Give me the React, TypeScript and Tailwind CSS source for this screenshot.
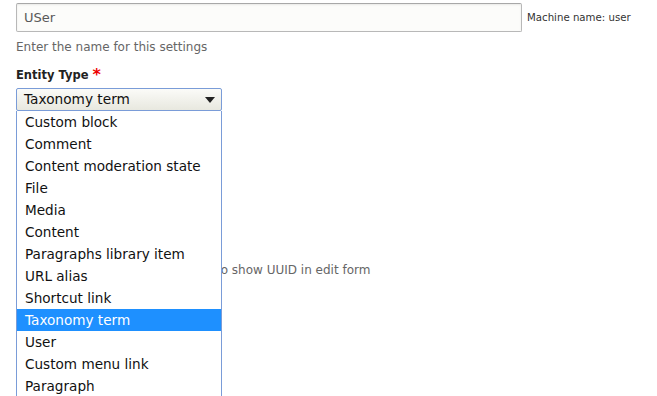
import React from "react";

const items = [
  "Custom block",
  "Comment",
  "Content moderation state",
  "File",
  "Media",
  "Content",
  "Paragraphs library item",
  "URL alias",
  "Shortcut link",
  "Taxonomy term",
  "User",
  "Custom menu link",
  "Paragraph",
];

export default function App() {
  return (
    <div
      className="relative h-[396px] w-[657px] overflow-hidden bg-white pt-[3px] pl-[16px] text-[#333]"
      style={{ fontFamily: '"DejaVu Sans", Verdana, sans-serif' }}
    >
      <div className="flex items-center">
        <div className="flex h-[29px] w-[506px] items-center rounded-[2px] border border-[#b8b8b8] border-t-[#a8a8a8] bg-[#fcfcfa] pl-[7px] text-[13px] text-[#595959] shadow-[inset_0_1px_2px_rgba(0,0,0,0.08)]">
          USer
        </div>
        <span className="ml-[5px] text-[10.2px] text-[#333]">Machine name: user</span>
      </div>
      <div className="mt-[7px] text-[12px] leading-[16px] text-[#666]">Enter the name for this settings</div>
      <div className="mt-[11px] flex items-center text-[11.5px] font-bold leading-[18px] text-[#222]">
        Entity Type
        <span className="ml-[4px] text-[16px] leading-[12px] text-[#e00]">*</span>
      </div>
      <div className="relative mt-[4px] w-[206px]">
        <div className="flex h-[23px] items-center justify-between rounded-[2px] border border-[#7a9cd8] bg-gradient-to-b from-[#fbfbf8] to-[#e8e8df] pl-[7px] pr-[5px] text-[13.7px] text-[#111]">
          <span>Taxonomy term</span>
          <svg width="10" height="6" viewBox="0 0 10 6" className="mr-[1px]">
            <path d="M0 0 L10 0 L5 6 Z" fill="#222" />
          </svg>
        </div>
        <div className="absolute left-0 top-[23px] z-10 w-[206px] border-x border-[#7a9cd8] bg-white">
          {items.map((it) => (
            <div
              key={it}
              className={
                it === "Taxonomy term"
                  ? "flex h-[22px] items-center bg-[#1e90ff] pl-[8px] text-[13.6px] text-white"
                  : "flex h-[22px] items-center pl-[8px] text-[13.6px] text-[#111]"
              }
            >
              {it}
            </div>
          ))}
        </div>
      </div>
      <div className="mt-[150px] flex items-center text-[12px] text-[#666]">
        <input type="checkbox" className="mr-[6px] h-[13px] w-[13px]" />
        <span className="ml-[89px]">Check this box to show UUID in edit form</span>
      </div>
    </div>
  );
}
